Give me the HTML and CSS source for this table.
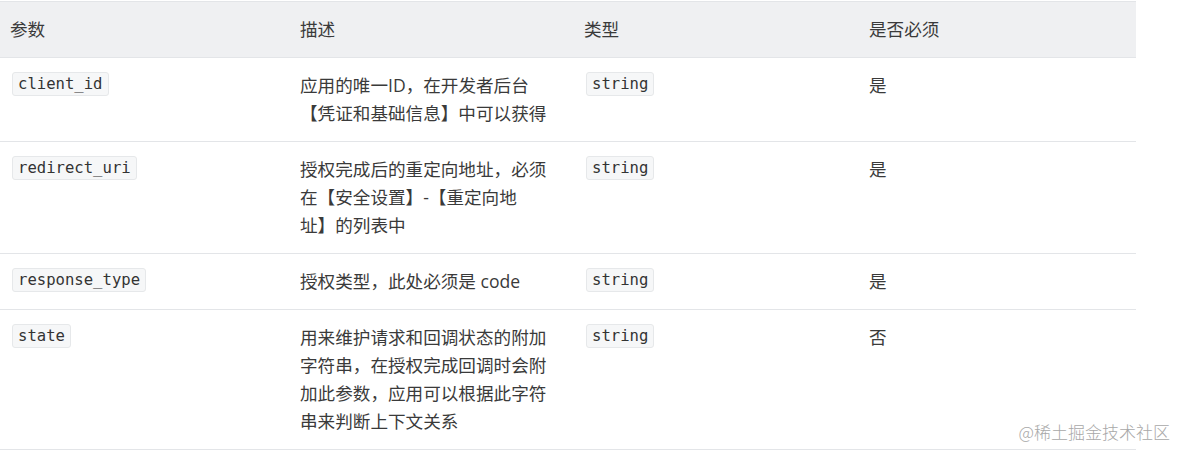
FILE: index.html
```html
<!DOCTYPE html>
<html lang="zh-CN">
<head>
    <meta charset="UTF-8">
    <title>授权参数</title>
    <link rel="stylesheet" href="styles.css">
</head>
<body>

<table class="params">
    <colgroup>
        <col class="col-name">
        <col class="col-desc">
        <col class="col-type">
        <col class="col-req">
    </colgroup>
    <thead>
        <tr>
            <th>参数</th>
            <th>描述</th>
            <th>类型</th>
            <th>是否必须</th>
        </tr>
    </thead>
    <tbody>
        <tr>
            <td><code>client_id</code></td>
            <td class="desc">应用的唯一ID，在开发者后台【凭证和基础信息】中可以获得</td>
            <td><code>string</code></td>
            <td>是</td>
        </tr>
        <tr>
            <td><code>redirect_uri</code></td>
            <td class="desc">授权完成后的重定向地址，必须在【安全设置】-【重定向地址】的列表中</td>
            <td><code>string</code></td>
            <td>是</td>
        </tr>
        <tr>
            <td><code>response_type</code></td>
            <td class="desc">授权类型，此处必须是 code</td>
            <td><code>string</code></td>
            <td>是</td>
        </tr>
        <tr>
            <td><code>state</code></td>
            <td class="desc">用来维护请求和回调状态的附加字符串，在授权完成回调时会附加此参数，应用可以根据此字符串来判断上下文关系</td>
            <td><code>string</code></td>
            <td>否</td>
        </tr>
    </tbody>
</table>

<div class="watermark">@稀土掘金技术社区</div>

</body>
</html>
```

FILE: styles.css
```css
body {
    margin: 0;
    padding-top: 1px;
    background-color: #fff;
    color: #3a3a3a;
    font-family: "Open Sans", "Noto Sans CJK SC", sans-serif;
    font-size: 17.6px;
    text-spacing-trim: space-all;
}
.params {
    width: 1136px;
    table-layout: fixed;
    border-collapse: collapse;
    border-top: 1px solid #e3e5e8;
}
.col-name { width: 290px; }
.col-desc { width: 284px; }
.col-type { width: 285px; }
.col-req { width: 277px; }
.params th,
.params td {
    padding: 13px 10px 14px;
    line-height: 28px;
    text-align: left;
    vertical-align: top;
    font-weight: normal;
    border-bottom: 1px solid #e3e5e8;
}
.params th {
    background-color: #eff0f2;
}
.params td.desc {
    padding-right: 27px;
}
code {
    display: inline-block;
    vertical-align: top;
    margin: 1px 2px 0;
    padding: 0 5px;
    line-height: 22px;
    font-family: "DejaVu Sans Mono", monospace;
    font-size: 15.6px;
    color: #333;
    background-color: #f6f7f8;
    border: 1px solid #e6e8ea;
    border-radius: 3px;
}
.watermark {
    position: absolute;
    right: 8px;
    bottom: 6px;
    color: #a8a8a8;
    font-family: "Noto Sans CJK SC", sans-serif;
    font-size: 17px;
    font-weight: 300;
}
```
